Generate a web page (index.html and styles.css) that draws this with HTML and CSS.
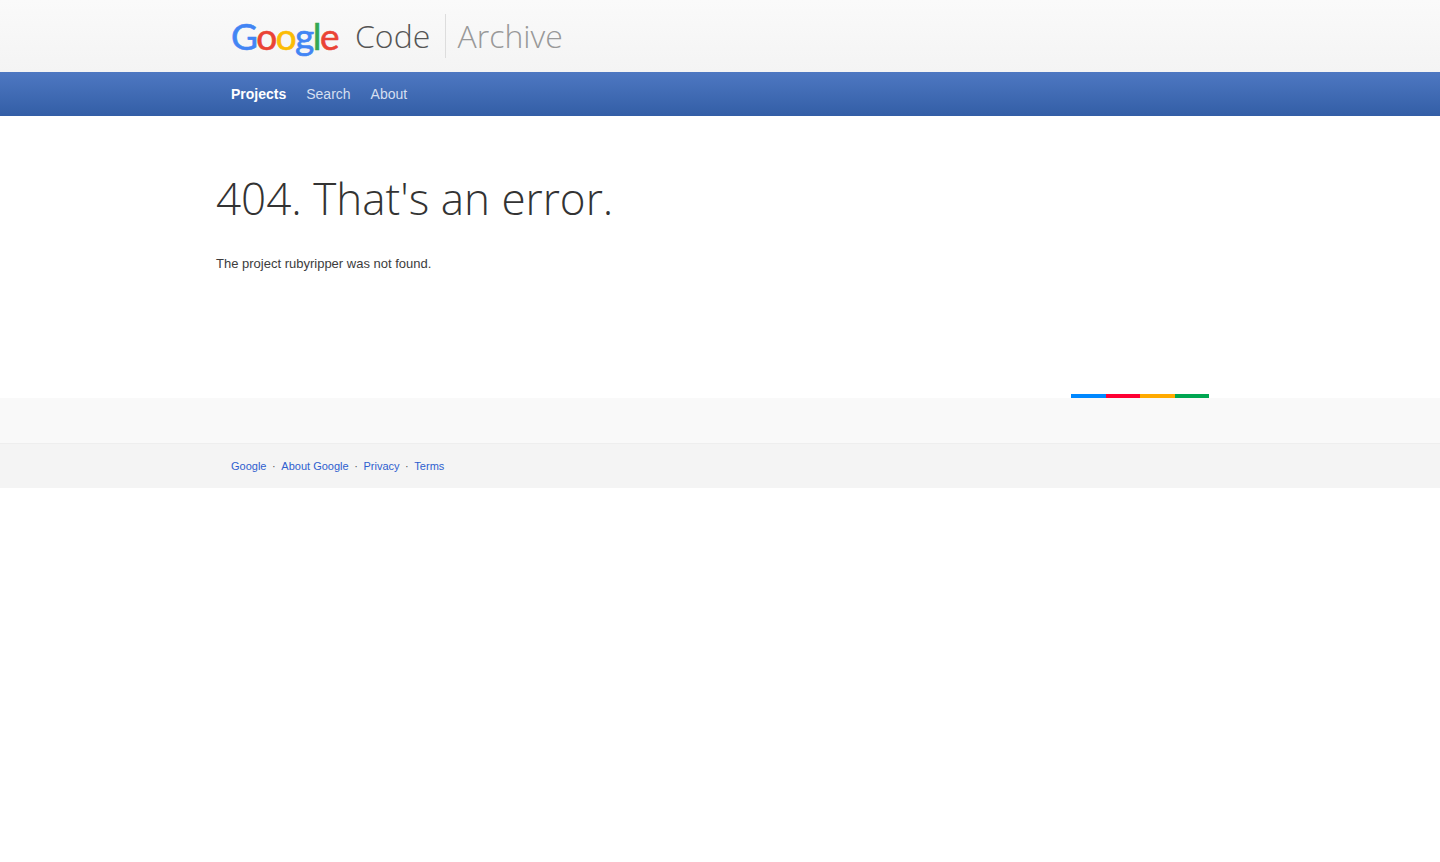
FILE: index.html
```html
<!DOCTYPE html>
<html lang="en">
<head>
<meta charset="utf-8">
<title>Google Code Archive</title>
<link rel="stylesheet" href="styles.css">
</head>
<body>
<header class="masthead">
  <div class="wrap brand">
    <span class="google"><span class="blue">G</span><span class="red">o</span><span class="yellow">o</span><span class="blue">g</span><span class="green">l</span><span class="red">e</span></span>
    <span class="code">Code</span>
    <span class="archive">Archive</span>
  </div>
</header>
<nav class="navbar">
  <div class="wrap links">
    <a class="active" href="#">Projects</a>
    <a href="#">Search</a>
    <a href="#">About</a>
  </div>
</nav>
<main class="content">
  <h1>404. That's an error.</h1>
  <p>The project rubyripper was not found.</p>
</main>
<div class="stripe">
  <i class="s-blue"></i><i class="s-red"></i><i class="s-yellow"></i><i class="s-green"></i>
</div>
<div class="footer-top"></div>
<footer class="footer">
  <div class="wrap foot-links">
    <a href="#">Google</a><span>·</span><a href="#">About Google</a><span>·</span><a href="#">Privacy</a><span>·</span><a href="#">Terms</a>
  </div>
</footer>
</body>
</html>
```
FILE: styles.css
```css
* { box-sizing: border-box; }
html, body { margin: 0; padding: 0; background: #fff; }
body { font-family: "Liberation Sans", Arial, sans-serif; color: #333; }
.wrap { width: 1008px; margin: 0 auto; padding-left: 15px; }
.masthead {
  height: 72px;
  background: linear-gradient(#fafafa, #f4f4f4);
}
.brand { display: flex; align-items: center; height: 72px; }
.google {
  font-family: Lato, sans-serif;
  font-size: 37px;
  font-weight: 400;
  -webkit-text-stroke: 0.6px;
  letter-spacing: -1.55px;
  line-height: 72px;
  width: 124px;
  flex: none;
}
.blue { color: #4285f4; }
.red { color: #ea4335; }
.yellow { color: #fbbc05; }
.green { color: #34a853; }
.code, .archive {
  font-family: "Open Sans", sans-serif;
  font-weight: 300;
  font-size: 32px;
  line-height: 44px;
}
.code { color: #555; width: 90px; }
.archive {
  color: #999;
  border-left: 1px solid #ddd;
  padding-left: 11.5px;
}
.navbar {
  height: 44px;
  background: linear-gradient(#4e78c2, #335ea6);
}
.links { display: flex; gap: 20px; align-items: center; height: 44px; }
.links a {
  color: #d5dff0;
  font-size: 14px;
  text-decoration: none;
}
.links a.active { color: #fff; font-weight: 700; }
.content { width: 1008px; margin: 0 auto; height: 278px; padding-top: 52px; }
h1 {
  margin: 0;
  font-family: "Open Sans", sans-serif;
  font-weight: 300;
  font-size: 44px;
  line-height: 60px;
  color: #333;
}
p { margin: 27px 0 0; font-size: 13px; line-height: 18px; color: #3c3c3c; }
.stripe { display: flex; height: 4px; width: 138px; margin-left: 1071px; }
.stripe i { display: block; flex: 1; }
.s-blue { background: #0088ff; }
.s-red { background: #ff0033; }
.s-yellow { background: #ffaa00; }
.s-green { background: #00a651; }
.footer-top { height: 46px; background: #f9f9f9; border-bottom: 1px solid #eee; }
.footer { height: 44px; background: #f4f4f4; }
.foot-links { display: flex; align-items: center; height: 44px; font-size: 11px; }
.foot-links a { color: #2f5fcf; text-decoration: none; }
.foot-links span { color: #555; width: 14.85px; text-align: center; }
```
